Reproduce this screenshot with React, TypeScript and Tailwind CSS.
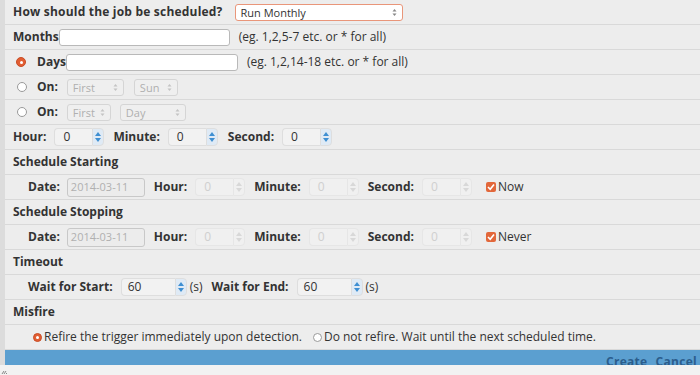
import React from 'react'

const font = { fontFamily: '"Open Sans", "Noto Sans", sans-serif' }

function UpDown({ color = '#9a9a9a' }: { color?: string }) {
  return (
    <svg width="5" height="9" viewBox="0 0 5 9" className="shrink-0">
      <path d="M0.5 3.5 L2.5 1 L4.5 3.5 Z" fill={color} />
      <path d="M0.5 5.5 L2.5 8 L4.5 5.5 Z" fill={color} />
    </svg>
  )
}

function Select({ value, width, active }: { value: string; width: string; active?: boolean }) {
  return (
    <div
      className={`${width} h-[17px] flex items-center justify-between pl-[5px] pr-[5px] rounded-[3px] border text-[11px] leading-none ${
        active ? 'border-[#e9967a] bg-white text-[#333]' : 'border-[#d5d5d5] bg-[#efefef] text-[#b0b0b0]'
      }`}
    >
      <span>{value}</span>
      <UpDown color={active ? '#888' : '#c4c4c4'} />
    </div>
  )
}

function TextBox({ width }: { width: string }) {
  return <div className={`${width} h-[17px] bg-white border border-[#b9b9b9] rounded-[3px]`} />
}

function Spin({ value, disabled, wide }: { value: string; disabled?: boolean; wide?: boolean }) {
  return (
    <div className="flex items-center h-[18px]">
      <div
        className={`${wide ? 'w-[54px] pl-[6px]' : 'w-[38px] pl-[8px]'} h-[18px] flex items-center text-[12px] rounded-l-[4px] border border-r-0 ${
          disabled ? 'border-[#e6e6e6] bg-[#f0f0f0] text-[#cfcfcf]' : 'border-[#dedede] bg-[#f2f2f2] text-[#333]'
        }`}
      >
        {value}
      </div>
      <div
        className={`w-[12px] h-[18px] flex flex-col items-center justify-center gap-[2px] rounded-r-[4px] border ${
          disabled ? 'border-[#e6e6e6] bg-[#f0f0f0]' : 'border-[#dedede] bg-[#dfeaf5]'
        }`}
      >
        <svg width="6" height="4" viewBox="0 0 6 4">
          <path d="M0 4 L3 0 L6 4 Z" fill={disabled ? '#d8d8d8' : '#3f8fd2'} />
        </svg>
        <svg width="6" height="4" viewBox="0 0 6 4">
          <path d="M0 0 L3 4 L6 0 Z" fill={disabled ? '#d8d8d8' : '#3f8fd2'} />
        </svg>
      </div>
    </div>
  )
}

function Radio({ checked, small }: { checked?: boolean; small?: boolean }) {
  const size = small ? 'w-[9px] h-[9px]' : 'w-[10px] h-[10px]'
  return checked ? (
    <span className={`${size} rounded-full bg-[#e25e33] border border-[#c94d25] flex items-center justify-center shrink-0`}>
      <span className="w-[3px] h-[3px] rounded-full bg-white" />
    </span>
  ) : (
    <span className={`${size} rounded-full bg-white border border-[#9a9a9a] shrink-0`} />
  )
}

function Check() {
  return (
    <span className="w-[10px] h-[10px] rounded-[2px] bg-[#e2673a] flex items-center justify-center shrink-0">
      <svg width="8" height="8" viewBox="0 0 8 8">
        <path d="M1 4 L3.2 6.2 L7 1.5" stroke="white" strokeWidth="1.6" fill="none" />
      </svg>
    </span>
  )
}

function Row({ children, className = '' }: { children: React.ReactNode; className?: string }) {
  return (
    <div className={`h-[25px] shrink-0 flex items-center border-b border-[#d9d9d9] ${className}`}>{children}</div>
  )
}

const B = ({ children, className = '' }: { children: React.ReactNode; className?: string }) => (
  <span className={`font-bold text-[12px] text-[#333] ${className}`}>{children}</span>
)

function DateRow({ last }: { last: string }) {
  return (
    <Row className="pl-[23px]">
      <B className="mr-[7px]">Date:</B>
      <div className="w-[78px] h-[19px] flex items-center pl-[3px] rounded-[3px] border border-[#c8c8c8] bg-[#ececec] text-[11px] text-[#b0b0b0]">
        2014-03-11
      </div>
      <B className="ml-[9px] mr-[8px]">Hour:</B>
      <Spin value="0" disabled />
      <B className="ml-[9px] mr-[8px]">Minute:</B>
      <Spin value="0" disabled />
      <B className="ml-[9px] mr-[8px]">Second:</B>
      <Spin value="0" disabled />
      <span className="ml-[14px] flex items-center gap-[2px] text-[12px] text-[#333]">
        <Check />
        {last}
      </span>
    </Row>
  )
}

export default function App() {
  return (
    <div className="w-[700px] h-[375px] overflow-hidden bg-[#f2f2f2] flex flex-col" style={font}>
      <div className="flex h-[365px] shrink-0">
        <div className="w-[5px] bg-[#dcdcdc] shrink-0" />
        <div className="flex-1 flex flex-col bg-[#ededed] text-[#333]">
          <Row className="pl-[8px]">
            <B className="mr-[12px] tracking-[0.2px]">How should the job be scheduled?</B>
            <Select value="Run Monthly" width="w-[168px]" active />
          </Row>
          <Row className="pl-[8px]">
            <B>Months</B>
            <TextBox width="w-[171px]" />
            <span className="ml-[9px] text-[12px]">(eg. 1,2,5-7 etc. or * for all)</span>
          </Row>
          <Row className="pl-[11px]">
            <Radio checked />
            <B className="ml-[11px]">Days</B>
            <TextBox width="w-[172px]" />
            <span className="ml-[9px] text-[12px]">(eg. 1,2,14-18 etc. or * for all)</span>
          </Row>
          <Row className="pl-[12px]">
            <Radio />
            <B className="ml-[10px] mr-[9px]">On:</B>
            <Select value="First" width="w-[57px]" />
            <span className="w-[10px]" />
            <Select value="Sun" width="w-[44px]" />
          </Row>
          <Row className="pl-[12px]">
            <Radio />
            <B className="ml-[10px] mr-[9px]">On:</B>
            <Select value="First" width="w-[44px]" />
            <span className="w-[9px]" />
            <Select value="Day" width="w-[66px]" />
          </Row>
          <Row className="pl-[8px]">
            <B className="mr-[8px]">Hour:</B>
            <Spin value="0" />
            <B className="ml-[9px] mr-[8px]">Minute:</B>
            <Spin value="0" />
            <B className="ml-[10px] mr-[8px]">Second:</B>
            <Spin value="0" />
          </Row>
          <Row className="pl-[8px]">
            <B>Schedule Starting</B>
          </Row>
          <DateRow last="Now" />
          <Row className="pl-[8px]">
            <B>Schedule Stopping</B>
          </Row>
          <DateRow last="Never" />
          <Row className="pl-[8px]">
            <B>Timeout</B>
          </Row>
          <Row className="pl-[23px]">
            <B className="mr-[8px]">Wait for Start:</B>
            <Spin value="60" wide />
            <span className="ml-[3px] text-[12px]">(s)</span>
            <B className="ml-[9px] mr-[8px]">Wait for End:</B>
            <Spin value="60" wide />
            <span className="ml-[3px] text-[12px]">(s)</span>
          </Row>
          <Row className="pl-[8px]">
            <B>Misfire</B>
          </Row>
          <Row className="pl-[28px] text-[12px]">
            <Radio checked small />
            <span className="ml-[2px]">Refire the trigger immediately upon detection.</span>
            <span className="ml-[11px]" />
            <Radio small />
            <span className="ml-[2px]">Do not refire. Wait until the next scheduled time.</span>
          </Row>
          <div className="flex-1 bg-[#5b9fd0] overflow-hidden flex justify-end items-start">
            <div className="mt-[3px] mr-[3px] flex gap-[8px] text-[12px] font-bold tracking-[0.3px] text-[#2b5d8c]">
              <span>Create</span>
              <span>Cancel</span>
            </div>
          </div>
        </div>
      </div>
      <div className="flex-1 flex items-start pt-[3px] pl-[1px]">
        <svg width="7" height="7" viewBox="0 0 7 7">
          <path d="M1 6 L3 3 M3 6 L5 3 M5 6 L6 5" stroke="#888" strokeWidth="1" />
        </svg>
      </div>
    </div>
  )
}
